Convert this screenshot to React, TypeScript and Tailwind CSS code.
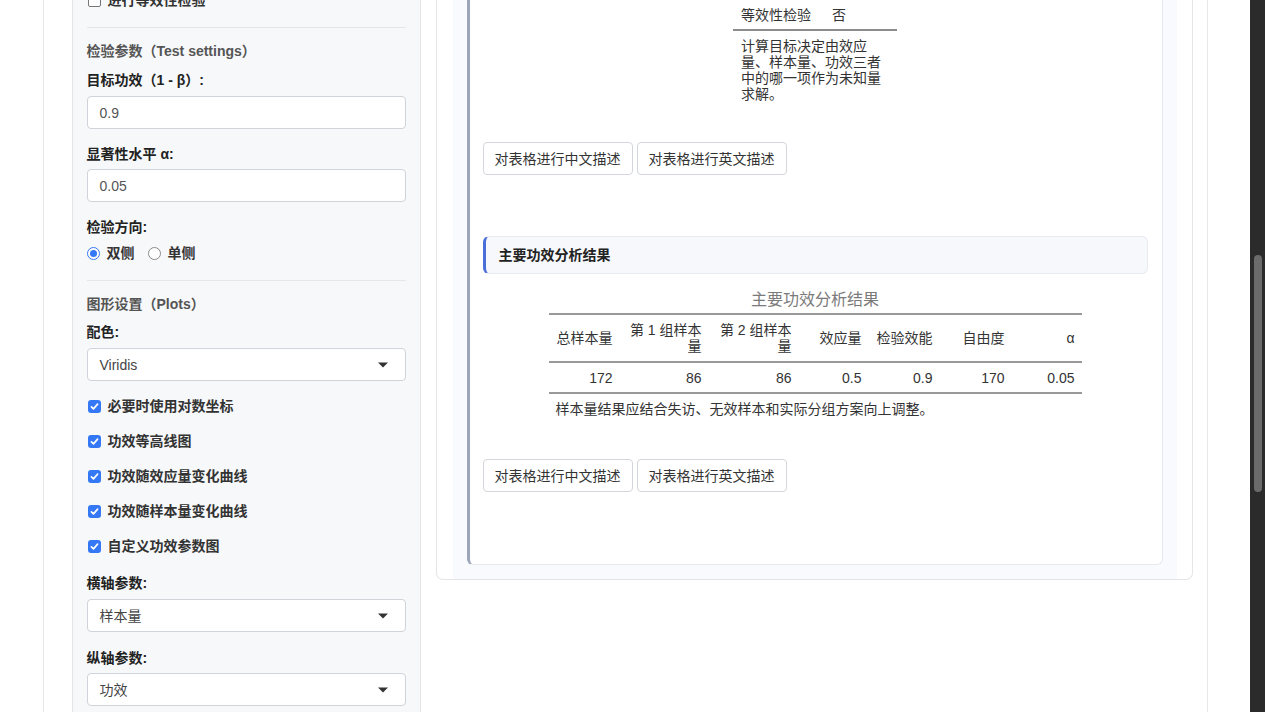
import type { ReactNode } from 'react';

const sansFont = "font-['Liberation_Sans','Noto_Sans_CJK_SC',sans-serif]";

function CheckBox({ checked }: { checked: boolean }) {
  if (!checked) {
    return <span className="h-[13px] w-[13px] shrink-0 rounded-[2px] border border-[#767676] bg-white" />;
  }
  return (
    <span className="flex h-[13px] w-[13px] shrink-0 items-center justify-center rounded-[3px] bg-[#3478f6]">
      <svg viewBox="0 0 16 16" className="h-[11px] w-[11px]">
        <path d="M3.5 8.5l3 3L12.5 4.5" fill="none" stroke="white" strokeWidth="2.4" strokeLinecap="round" strokeLinejoin="round" />
      </svg>
    </span>
  );
}

function CheckRow({ label, checked = true, className = '' }: { label: string; checked?: boolean; className?: string }) {
  return (
    <div className={`flex h-5 items-center gap-[7px] pl-px ${className}`}>
      <CheckBox checked={checked} />
      <span className="text-sm font-bold text-[#333]">{label}</span>
    </div>
  );
}

function Label({ children, className = '' }: { children: ReactNode; className?: string }) {
  return <div className={`h-5 text-sm leading-5 font-bold text-[#222] ${className}`}>{children}</div>;
}

function SectionTitle({ children, className = '' }: { children: ReactNode; className?: string }) {
  return <div className={`h-5 text-sm leading-5 font-semibold text-[#555] ${className}`}>{children}</div>;
}

function TextBox({ value, className = '' }: { value: string; className?: string }) {
  return (
    <div className={`flex h-[33px] items-center rounded-[4px] border border-[#ced4da] bg-white px-3 text-sm text-[#555] ${className}`}>
      {value}
    </div>
  );
}

function SelectBox({ value, className = '' }: { value: string; className?: string }) {
  return (
    <div className={`flex h-[33px] items-center justify-between rounded-[4px] border border-[#ced4da] bg-white pl-3 pr-[17px] text-sm text-[#444] ${className}`}>
      <span>{value}</span>
      <svg viewBox="0 0 10 6" className="h-[6px] w-[10px]">
        <path d="M0 0.5h10L5 5.5z" fill="#333" />
      </svg>
    </div>
  );
}

function Radio({ checked, className = '' }: { checked: boolean; className?: string }) {
  return checked ? (
    <span className={`flex h-[13px] w-[13px] shrink-0 items-center justify-center rounded-full border border-[#3478f6] bg-white ${className}`}>
      <span className="h-[7px] w-[7px] rounded-full bg-[#3478f6]" />
    </span>
  ) : (
    <span className={`block h-[13px] w-[13px] shrink-0 rounded-full border border-[#8a8a8a] bg-white ${className}`} />
  );
}

function Sidebar() {
  return (
    <aside className="w-[349px] shrink-0 self-stretch border-x border-[#e3e5e8] bg-[#f7f8fa] px-[14px] pb-10">
      <CheckRow label="进行等效性检验" checked={false} className="-mt-[10px]" />
      <div className="mt-[17px] h-px bg-[#e4e6ea]" />

      <SectionTitle className="mt-[13px]">检验参数（Test settings）</SectionTitle>
      <Label className="mt-[9px]">目标功效（1 - β）:</Label>
      <TextBox value="0.9" className="mt-[6px]" />
      <Label className="mt-[15px]">显著性水平 α:</Label>
      <TextBox value="0.05" className="mt-[5px]" />
      <Label className="mt-[15px]">检验方向:</Label>
      <div className="mt-[6px] flex h-5 items-center text-sm font-bold text-[#333]">
        <Radio checked />
        <span className="ml-[7px]">双侧</span>
        <Radio checked={false} className="ml-[13px]" />
        <span className="ml-[7px]">单侧</span>
      </div>
      <div className="mt-[17px] h-px bg-[#e4e6ea]" />

      <SectionTitle className="mt-[13px]">图形设置（Plots）</SectionTitle>
      <Label className="mt-[8px]">配色:</Label>
      <SelectBox value="Viridis" className="mt-[6px]" />
      <CheckRow label="必要时使用对数坐标" className="mt-[15px]" />
      <CheckRow label="功效等高线图" className="mt-[15px]" />
      <CheckRow label="功效随效应量变化曲线" className="mt-[15px]" />
      <CheckRow label="功效随样本量变化曲线" className="mt-[15px]" />
      <CheckRow label="自定义功效参数图" className="mt-[15px]" />
      <Label className="mt-[17px]">横轴参数:</Label>
      <SelectBox value="样本量" className="mt-[6px]" />
      <Label className="mt-[16px]">纵轴参数:</Label>
      <SelectBox value="功效" className="mt-[5px]" />
    </aside>
  );
}

function DescribeButtons({ className = '' }: { className?: string }) {
  return (
    <div className={`flex gap-[4px] ${className}`}>
      <button type="button" className="h-[33px] w-[150px] rounded-[4px] border border-[#d3d6da] bg-white text-sm text-[#333]">
        对表格进行中文描述
      </button>
      <button type="button" className="h-[33px] w-[150px] rounded-[4px] border border-[#d3d6da] bg-white text-sm text-[#333]">
        对表格进行英文描述
      </button>
    </div>
  );
}

const resultHeaders = ['总样本量', '第 1 组样本量', '第 2 组样本量', '效应量', '检验效能', '自由度', 'α'];
const resultRow = ['172', '86', '86', '0.5', '0.9', '170', '0.05'];
const colWidths = ['w-[71px]', 'w-[89px]', 'w-[90px]', 'w-[70px]', 'w-[71px]', 'w-[72px]', 'w-[70px]'];

function ResultTable() {
  return (
    <div className="flex flex-col items-center">
      <div className="mt-[16px] h-5 text-base leading-5 text-[#7a7a7a]">主要功效分析结果</div>
      <table className="mt-[3px] w-[533px] table-fixed border-collapse text-sm text-[#333]">
        <colgroup>
          {colWidths.map((w, i) => (
            <col key={i} className={w} />
          ))}
        </colgroup>
        <thead>
          <tr className="h-[48px] border-y-2 border-[#999]">
            {resultHeaders.map((h) => (
              <th key={h} className="px-[7px] text-right align-middle leading-4 font-normal">
                {h}
              </th>
            ))}
          </tr>
        </thead>
        <tbody>
          <tr className="h-[31px] border-b-2 border-[#999]">
            {resultRow.map((v, i) => (
              <td key={i} className="px-[7px] text-right align-middle">
                {v}
              </td>
            ))}
          </tr>
        </tbody>
        <tfoot>
          <tr>
            <td colSpan={7} className="px-[7px] pt-[5px] leading-5">
              样本量结果应结合失访、无效样本和实际分组方案向上调整。
            </td>
          </tr>
        </tfoot>
      </table>
    </div>
  );
}

function MainPanel() {
  return (
    <section className="w-[757px] shrink-0 self-start rounded-b-[7px] border-x border-b border-[#e3e5e8] bg-white pl-4 pr-[15px]">
      <div className="bg-[#f8fafd] px-[14px] pb-[14px]">
        <div className="rounded-b-[6px] border-r border-b border-l-[3px] border-r-[#e6e9ee] border-b-[#e6e9ee] border-l-[#9ca6b8] bg-white pb-[72px] pl-[13px] pr-[14px] text-sm text-[#333]">
          <div className="flex justify-center">
            <table className="w-[164px] table-fixed border-collapse">
              <colgroup>
                <col className="w-[91px]" />
                <col className="w-[73px]" />
              </colgroup>
              <tbody>
                <tr className="h-[30px] border-b-2 border-[#8c8c8c]">
                  <td className="pl-2 align-middle">等效性检验</td>
                  <td className="pl-2 align-middle">否</td>
                </tr>
              </tbody>
              <tfoot>
                <tr>
                  <td colSpan={2} className="px-2 pt-[7px] leading-4">
                    计算目标决定由效应量、样本量、功效三者中的哪一项作为未知量求解。
                  </td>
                </tr>
              </tfoot>
            </table>
          </div>

          <DescribeButtons className="mt-[40px]" />

          <div className="mt-[61px] flex h-[38px] items-center rounded-[6px] border border-l-[3px] border-[#e8ebf0] border-l-[#4b6fd8] bg-[#f6f8fb] pl-[13px] text-sm font-bold text-[#222]">
            主要功效分析结果
          </div>

          <ResultTable />

          <DescribeButtons className="mt-[40px]" />
        </div>
      </div>
    </section>
  );
}

export default function App() {
  return (
    <div className={`flex h-[712px] w-full overflow-hidden bg-white ${sansFont}`}>
      <div className="min-w-0 flex-1">
        <div className="mx-auto flex h-full w-[1165px] gap-[15px] border-x border-[#e6e7ea] pl-[28px] pr-[14px]">
          <Sidebar />
          <MainPanel />
        </div>
      </div>
      <div className="flex w-[15px] shrink-0 justify-center bg-[#2b2b2b] pt-[255px]">
        <div className="h-[237px] w-[8px] rounded-full bg-[#6b6b6b]" />
      </div>
    </div>
  );
}
